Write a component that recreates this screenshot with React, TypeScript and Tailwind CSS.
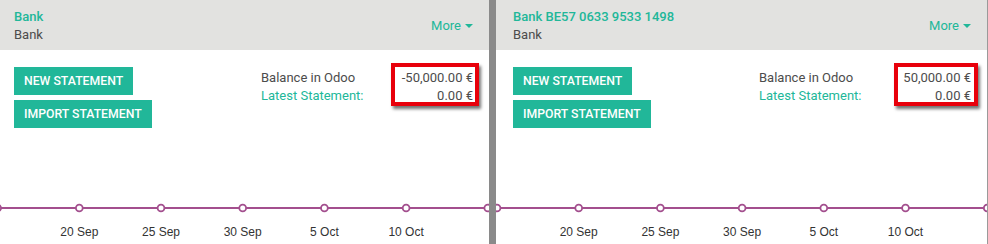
import { Fragment } from "react";

const LINE = "#a34f8e";
const LABELS = ["20 Sep", "25 Sep", "30 Sep", "5 Oct", "10 Oct"];

function TrendChart({ width, start }: { width: number; start: number }) {
  const step = 81.7;
  const points = Array.from({ length: 7 }, (_, i) => start + i * step);
  return (
    <svg width={width} height={60} className="block" aria-hidden>
      <line x1={-10} y1={24} x2={width + 10} y2={24} stroke={LINE} strokeWidth={2} />
      {points.map((x, i) => (
        <circle key={i} cx={x} cy={24} r={3.4} fill="#fff" stroke={LINE} strokeWidth={1.8} />
      ))}
      {LABELS.map((label, i) => (
        <text
          key={label}
          x={points[i + 1]}
          y={52}
          textAnchor="middle"
          fill="#333"
          style={{ fontSize: 12, fontFamily: '"Liberation Sans", Arial, sans-serif' }}
        >
          {label}
        </text>
      ))}
    </svg>
  );
}

function JournalCard({
  title,
  balance,
  width,
  chartStart,
  padClass,
  boxClass,
}: {
  title: string;
  balance: string;
  width: number;
  chartStart: number;
  padClass: string;
  boxClass: string;
}) {
  return (
    <div className="relative flex h-full shrink-0 flex-col overflow-hidden bg-white" style={{ width }}>
      {/* Header */}
      <div className={`flex h-[50px] items-start justify-between bg-[#e2e2e0] pr-[16px] pt-[8px] ${padClass}`}>
        <div className="flex flex-col leading-[18px]">
          <span className="text-[13px] font-medium text-[#21b799]">{title}</span>
          <span className="text-[13px] text-[#4c4c4c]">Bank</span>
        </div>
        <div className="mt-[8px] flex items-center gap-[4px] text-[13px] text-[#21b799]">
          More
          <span className="mt-[1px] h-0 w-0 border-x-[4px] border-t-[4px] border-x-transparent border-t-[#21b799]" />
        </div>
      </div>

      {/* Body */}
      <div className={`flex items-start justify-between pr-[16px] pt-[17px] ${padClass}`}>
        <div className="flex flex-col items-start gap-[5px]">
          <button className="h-[28px] bg-[#21b799] px-[10px] text-[12.25px] font-medium uppercase text-white">
            New Statement
          </button>
          <button className="h-[28px] bg-[#21b799] px-[10px] text-[12.25px] font-medium uppercase text-white">
            Import Statement
          </button>
        </div>
        <div className="grid grid-cols-[134px_78px] content-start pt-[2px] text-[13px] leading-[18px]">
          {[
            { label: "Balance in Odoo", value: balance, teal: false },
            { label: "Latest Statement:", value: "0.00 €", teal: true },
          ].map(({ label, value, teal }) => (
            <Fragment key={label}>
              <span className={teal ? "text-[#21b799]" : "text-[#4c4c4c]"}>{label}</span>
              <span className="text-right text-[#4c4c4c]">{value}</span>
            </Fragment>
          ))}
        </div>
      </div>

      {/* Red annotation box */}
      <div
        className={`absolute h-[43px] border-[4px] border-[#e8000b] shadow-[2px_3px_3px_rgba(0,0,0,0.55)] ${boxClass}`}
      />

      <div className="mt-auto">
        <TrendChart width={width} start={chartStart} />
      </div>
    </div>
  );
}

export default function App() {
  return (
    <div
      className="flex h-[244px] w-[988px] bg-white text-[#4c4c4c]"
      style={{ fontFamily: 'Roboto, "Liberation Sans", Arial, sans-serif' }}
    >
      <JournalCard
        title="Bank"
        balance="-50,000.00 €"
        width={489}
        chartStart={-2.4}
        padClass="pl-[14px]"
        boxClass="left-[391px] top-[63px] w-[88px]"
      />
      <div className="h-full w-[7px] shrink-0 bg-[#8a8a8a]" />
      <JournalCard
        title="Bank BE57 0633 9533 1498"
        balance="50,000.00 €"
        width={491}
        chartStart={1}
        padClass="pl-[17px]"
        boxClass="left-[398px] top-[63px] w-[84px]"
      />
      <div className="h-full w-px shrink-0 bg-[#9a9a9a]" />
    </div>
  );
}
